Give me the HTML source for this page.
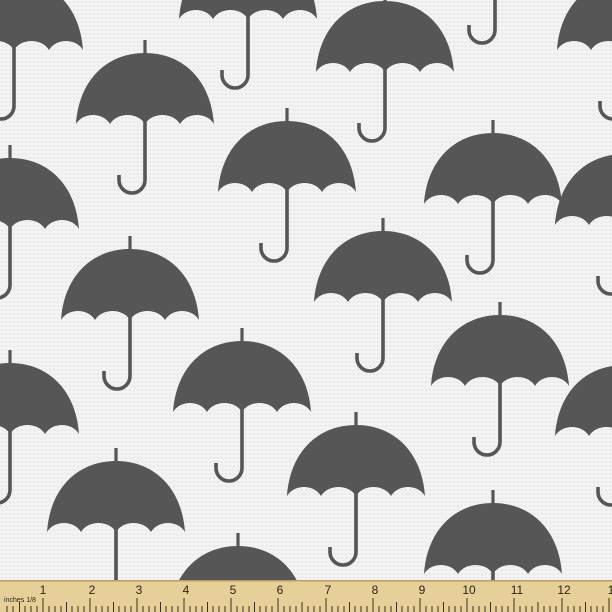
<!DOCTYPE html>
<html style="overflow:hidden;width:612px;height:612px"><head><style>
html,body{margin:0;padding:0}
body{width:612px;height:612px;overflow:hidden;background:#f0f0f0}
svg{display:block;position:absolute;left:0;top:0}
</style></head><body>
<svg width="612" height="612" viewBox="0 0 612 612" xmlns="http://www.w3.org/2000/svg">
<defs>
<pattern id="tx" width="4" height="4" patternUnits="userSpaceOnUse"><rect width="4" height="4" fill="#f3f3f3"/><circle cx="2" cy="2" r="0.9" fill="#e2e2e2"/></pattern>
<g id="u">
<rect x="-1.6" y="0" width="3.2" height="16" fill="#565656"/>
<path d="M-69 84 C-66 40 -38 13 0 13 C38 13 66 40 69 84 C62 72 42 72 35 84 C28 72 7 72 0 84 C-7 72 -28 72 -35 84 C-42 72 -62 72 -69 84Z" fill="#565656"/>
<path d="M0 80 V140 A13 13 0 0 1 -26 140 V135" fill="none" stroke="#565656" stroke-width="3.6"/>
</g>
</defs>
<rect width="612" height="612" fill="url(#tx)"/>
<use href="#u" x="130" y="236"/>
<use href="#u" x="287" y="108"/>
<use href="#u" x="145" y="40"/>
<use href="#u" x="10" y="145"/>
<use href="#u" x="383" y="218"/>
<use href="#u" x="493" y="120"/>
<use href="#u" x="385" y="-12"/>
<use href="#u" x="14" y="-34"/>
<use href="#u" x="248" y="-65"/>
<use href="#u" x="626" y="-34"/>
<use href="#u" x="495" y="-110"/>
<use href="#u" x="10" y="350"/>
<use href="#u" x="242" y="328"/>
<use href="#u" x="500" y="302"/>
<use href="#u" x="356" y="412"/>
<use href="#u" x="116" y="448"/>
<use href="#u" x="624" y="352"/>
<use href="#u" x="493" y="490"/>
<use href="#u" x="238" y="533"/>
<use href="#u" x="624" y="141"/>
<rect x="0" y="580" width="612" height="32" fill="#e6cf98"/>
<rect x="0" y="580" width="612" height="1.5" fill="#b89f68"/>
<g font-family="Liberation Sans, sans-serif" font-size="12" fill="#2a2418" text-anchor="middle">
<text x="43" y="594">1</text><text x="92" y="594">2</text><text x="139" y="594">3</text><text x="186" y="594">4</text><text x="233" y="594">5</text><text x="280" y="594">6</text><text x="328" y="594">7</text><text x="375" y="594">8</text><text x="422" y="594">9</text><text x="469" y="594">10</text><text x="517" y="594">11</text><text x="564" y="594">12</text><text x="611" y="594">1</text>
<text x="20" y="602" font-size="7">inches 1/8</text>
</g>
<path stroke="#3a3020" stroke-width="1" d="
M43 598V612M90 598V612M137 598V612M184 598V612M231 598V612M278 598V612M326 598V612M373 598V612M420 598V612M467 598V612M514 598V612M562 598V612M609 598V612
M66.5 602V612M113.5 602V612M160.5 602V612M207.5 602V612M254.5 602V612M302 602V612M349.5 602V612M396.5 602V612M443.5 602V612M490.5 602V612M538 602V612M585.5 602V612M19.5 602V612
M7 606V612M13 606V612M25 606V612M31 606V612M37 606V612M49 606V612M55 606V612M61 606V612M72 606V612M78 606V612M84 606V612M96 606V612M102 606V612M108 606V612M119 606V612M125 606V612M131 606V612M143 606V612M149 606V612M155 606V612M166 606V612M172 606V612M178 606V612M190 606V612M196 606V612M202 606V612M213 606V612M219 606V612M225 606V612M237 606V612M243 606V612M249 606V612M260 606V612M266 606V612M272 606V612M284 606V612M290 606V612M296 606V612M308 606V612M314 606V612M320 606V612M332 606V612M338 606V612M344 606V612M355 606V612M361 606V612M367 606V612M379 606V612M385 606V612M391 606V612M402 606V612M408 606V612M414 606V612M426 606V612M432 606V612M438 606V612M449 606V612M455 606V612M461 606V612M473 606V612M479 606V612M485 606V612M496 606V612M502 606V612M508 606V612M520 606V612M526 606V612M532 606V612M544 606V612M550 606V612M556 606V612M568 606V612M574 606V612M580 606V612M591 606V612M597 606V612M603 606V612"/>
</svg>
</body></html>
